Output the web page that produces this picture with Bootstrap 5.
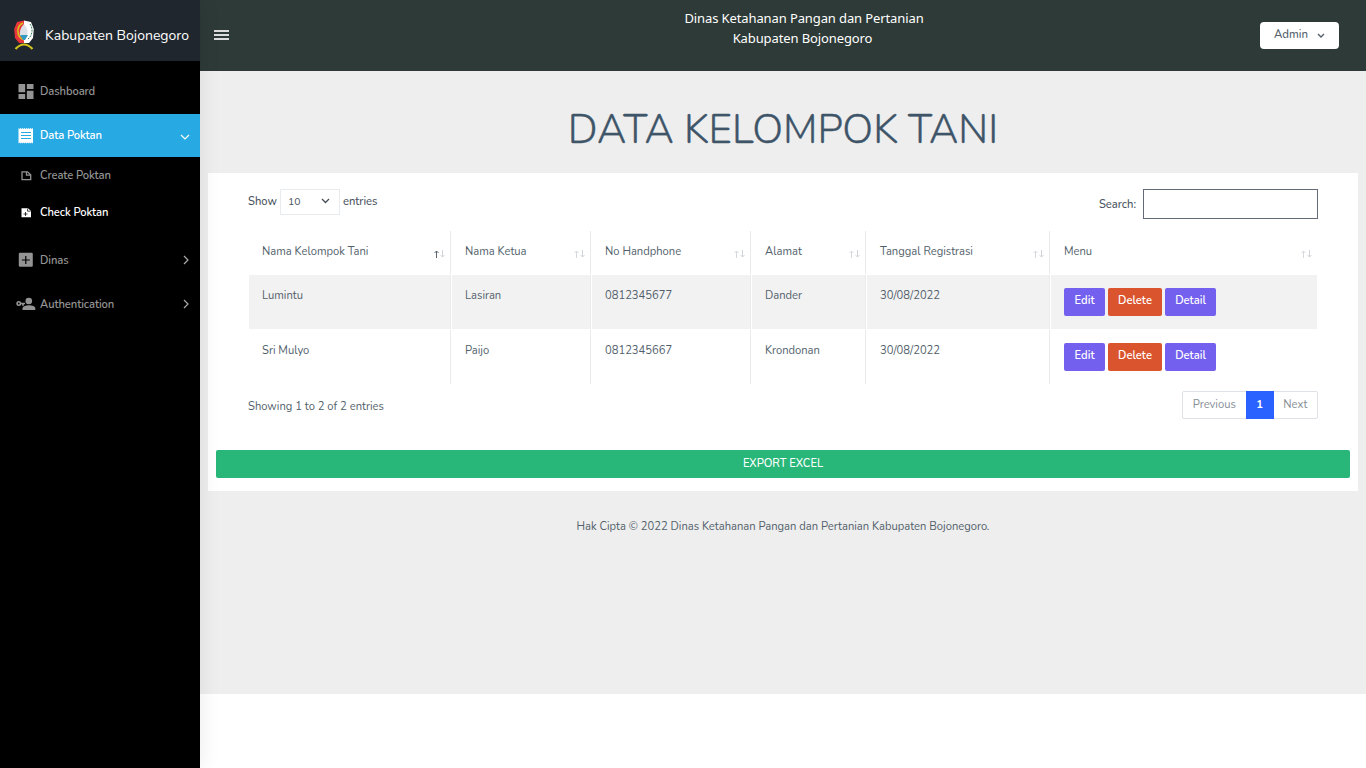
<!DOCTYPE html>
<html lang="id">
<head>
<meta charset="utf-8">
<meta name="viewport" content="width=device-width, initial-scale=1">
<title>Data Kelompok Tani</title>
<link href="https://cdn.jsdelivr.net/npm/bootstrap@5.3.0/dist/css/bootstrap.min.css" rel="stylesheet">
<style>
body{font-family:Nunito,Lato,"Open Sans",sans-serif;font-size:11.2px;line-height:17px;color:#525f6b;background:#fff;height:768px;overflow:hidden}
.side{width:200px;height:768px;background:#000;box-shadow:1px 0 20px rgba(0,0,0,.08);z-index:2}
.brand{height:61px;background:#1f262d;color:#fff;padding:9px 0 0 12px;font-size:14px}
.brand svg{margin-right:9px}
.brand-name{margin-top:18px}
.side-link{color:#949494;font-weight:600;letter-spacing:-.09px;padding:0 10px 0 18px;text-decoration:none;height:44px}
.side-link span{flex:1}
.side-link.on{background:#27a9e3;color:#fff;height:43px}
.side-link.sub{height:37px}
.main-ico{width:16px;margin-right:6px;flex:none;overflow:visible}
.topbar{height:71px;background:#2d3a37;color:#fff}
.agency{font-family:"Noto Sans",sans-serif;font-size:13px;line-height:20px;padding-top:8px;margin-left:55px;letter-spacing:-.11px}
.adm{background:#fff;color:#525f6b;width:79px;height:27px;border-radius:4px;font-size:11.4px;line-height:25px;padding:0 14px;border:0;margin:22px 27px 0 0;font-weight:500}
.burger{margin:29px 0 0 14px;width:79px;padding-right:64px;box-sizing:border-box}
.page-area{background:#eee;height:623px}
.big-title{font-weight:300;font-size:40.6px;line-height:48px;color:#3e5569;-webkit-text-stroke:.35px #3e5569;margin:0;padding-top:35px;height:102px}
.panel{background:#fff;margin:0 8px;height:318px;padding:16px 8px 13px}
.inner{padding:0 32px}
.lbl{font-weight:500;color:#4a5360}
.sel{width:60px;height:26px;border:1px solid #e9ecef;padding:0 9px 1px 7px;font-size:10.4px;font-weight:400;margin:0 3px}
.sel svg{margin-top:-1px}
.find{width:175px;height:30px;border:1px solid #626a75;border-radius:0;margin-left:7px;background:#fff}
.grid-table{border-collapse:separate;border-spacing:1px;table-layout:fixed;width:1070px;margin-top:11px}
.grid-table th,.grid-table td{font-weight:400;padding:12px 13px 0;vertical-align:top;border-right:1px solid #e9ecef}
.grid-table th:last-child,.grid-table td:last-child{border-right:0}
.grid-table th{height:43px}.grid-table td{height:54px}
.grid-table tr.z td{background:#f2f2f2}
.sorter{margin:6px -8px 0 0}
.act{color:#fff;font-size:11.2px;line-height:17px;height:28px;padding:4px 0 7px;border:0;border-radius:2px;font-weight:600}
.violet{background:#7460ee}.rust{background:#da542e}
.pagination{--bs-pagination-font-size:11.2px}
.page-link{height:28px;padding:4px 9.7px;line-height:18px;color:#868e96;border-color:#dee2e6}
.page-item.active .page-link{background:#2962ff;border-color:#2962ff;font-weight:700}
.page-item:first-child .page-link,.page-item:last-child .page-link{border-radius:2px}
.export{background:#28b779;color:#fff;height:28px;border-radius:2px;border:0;line-height:17px;padding:5px 0 6px;font-size:11.2px;font-weight:500}
</style>
</head>
<body>
<div class="d-flex">
<aside class="side flex-shrink-0 position-relative">
  <div class="brand d-flex align-items-start">
    <svg width="24" height="44" viewBox="0 0 24 44"><path d="M12 11.500L5 13 2.200 20 3 29 7 34H12Z" fill="#e8353b"/><path d="M12 11.500L19 13 21.800 20 21 29 17 34H12Z" fill="#fff"/><path d="M18 15c3 4 3 11-2 15" fill="none" stroke="#348060" stroke-width="1" stroke-dasharray="2 1"/><path d="M11 14C4 17 4 28 12 31" fill="none" stroke="#d8bd20" stroke-width="1.6"/><path d="M12 15q5 6 3 12H8Q7 20 12 15" fill="#dce1e8"/><path d="M8 26h8l-3 5h-2z" fill="#319ac3"/><path d="M3.500 40q8.500-9 17 0" fill="none" stroke="#d4c31b" stroke-width="2.2"/></svg>
    <span class="brand-name">Kabupaten Bojonegoro</span>
  </div>
  <nav class="d-flex flex-column">
    <a class="side-link d-flex align-items-center" style="margin-top:8px"><svg class="main-ico" height="15" viewBox="3 3 18 18" fill="#949494"><path d="M3 3h8v10H3zM13 3h8v6h-8zM13 11h8v10h-8zM3 15h8v6H3z"/></svg><span>Dashboard</span></a>
    <a class="side-link on d-flex align-items-center" style="margin-top:1px"><svg class="main-ico" height="16" viewBox="0 0 16 16"><path d="M.5 0l1 1 1-1 1 1 1-1 1 1 1-1 1 1 1-1 1 1 1-1 1 1 1-1 1 1 1-1 .5 1V14.500l-.5 1-1-1-1 1-1-1-1 1-1-1-1 1-1-1-1 1-1-1-1 1-1-1-1 1-1-1-1 1Z" fill="#fff"/><path d="M3 4.500h10M3 7.500h10M3 10.500h10" stroke="#27a9e3"/></svg><span>Data Poktan</span><svg width="10" height="6" viewBox="0 0 10 6" style="margin-top:2px"><path d="M1 1l4 4 4-4" fill="none" stroke="#fff" stroke-width="1.2"/></svg></a>
    <a class="side-link sub d-flex align-items-center"><svg class="main-ico" height="10" viewBox="0 0 16 10"><path d="M4 .8h5.500l3.200 2.900v5H4z M8.500 1v3.200h4" fill="none" stroke="#949494" stroke-width="1.3"/></svg><span>Create Poktan</span></a>
    <a class="side-link sub d-flex align-items-center text-white"><svg class="main-ico" height="10" viewBox="0 0 16 10"><path d="M3.500.3h6.500l3 2.800v6.200H3.500z" fill="#fff"/><path d="M7.500 4v4M5.500 6h4M9.600 .6v2.600h3" fill="none" stroke="#111" stroke-width=".8"/></svg><span>Check Poktan</span></a>
    <a class="side-link d-flex align-items-center" style="margin-top:7px"><svg class="main-ico" height="16" viewBox="0 0 16 16"><rect x=".8" y=".8" width="14" height="14" rx="1.300" fill="#949494"/><path d="M7.800 4v8M3.800 8h8" stroke="#000" stroke-width="1.200"/></svg><span>Dinas</span><svg width="8" height="10" viewBox="0 0 8 10"><path d="M2 1l4 4-4 4" fill="none" stroke="#aaa" stroke-width="1.2"/></svg></a>
    <a class="side-link d-flex align-items-center"><svg class="main-ico" height="16" viewBox="0 0 16 16"><circle cx="10.800" cy="5" r="3.300" fill="#949494"/><path d="M4.500 14v-2q1-2.700 6.500-2.700 5.500 0 6.300 2.700v2z" fill="#949494"/><circle cx=".8" cy="7.500" r="1.700" fill="none" stroke="#949494" stroke-width="1.600"/><path d="M2.700 7.500H7M5 7.500v2.200" stroke="#949494" stroke-width="1.700"/></svg><span>Authentication</span><svg width="8" height="10" viewBox="0 0 8 10"><path d="M2 1l4 4-4 4" fill="none" stroke="#aaa" stroke-width="1.2"/></svg></a>
  </nav>
</aside>
<main class="flex-grow-1">
  <header class="topbar d-flex justify-content-between">
    <svg class="burger" height="12" viewBox="0 0 15 12"><path d="M0 2h15M0 6h15M0 10h15" stroke="#ddd" stroke-width="1.8"/></svg>
    <div class="agency text-center"><div>Dinas Ketahanan Pangan dan Pertanian</div><div style="margin-right:3px">Kabupaten Bojonegoro</div></div>
    <button class="adm d-flex justify-content-between"><span>Admin</span><svg width="8" height="6" viewBox="0 0 8 6" style="margin-top:11px"><path d="M1 1l3 3 3-3" fill="none" stroke="#525f6b" stroke-width="1.4"/></svg></button>
  </header>
  <div class="page-area">
    <h1 class="big-title text-center">DATA KELOMPOK TANI</h1>
    <section class="panel">
      <div class="inner">
        <div class="d-flex justify-content-between align-items-start">
          <div class="d-flex align-items-start lbl"><span style="padding-top:4px">Show</span><div class="sel d-flex align-items-center justify-content-between"><span>10</span><svg width="9" height="6" viewBox="0 0 9 6"><path d="M1 1l3.500 3.500L8 1" fill="none" stroke="#444c55" stroke-width="1.3"/></svg></div><span style="padding-top:4px">entries</span></div>
          <label class="d-flex align-items-center lbl"><span>Search:</span><input class="find" type="search" aria-label="Search"></label>
        </div>
        <table class="grid-table">
          <colgroup><col style="width:202px"><col style="width:139px"><col style="width:159px"><col style="width:114px"><col style="width:183px"><col style="width:266px"></colgroup>
          <thead><tr id="heads"></tr></thead>
          <tbody id="rows"></tbody>
        </table>
        <div class="d-flex justify-content-between" style="margin-top:6px;height:59px">
          <div style="padding-top:7px">Showing 1 to 2 of 2 entries</div>
          <ul class="pagination mb-0"><li class="page-item"><a class="page-link">Previous</a></li><li class="page-item active"><a class="page-link">1</a></li><li class="page-item"><a class="page-link">Next</a></li></ul>
        </div>
      </div>
      <button class="export w-100 d-block">EXPORT EXCEL</button>
    </section>
    <footer class="text-center" style="padding-top:27px">Hak Cipta © 2022 Dinas Ketahanan Pangan dan Pertanian Kabupaten Bojonegoro.</footer>
  </div>
</main>
</div>
<script>
const heads=["Nama Kelompok Tani","Nama Ketua","No Handphone","Alamat","Tanggal Registrasi","Menu"];
document.getElementById("heads").innerHTML=heads.map((h,i)=>`<th><div class="d-flex justify-content-between"><span>${h}</span><svg class="sorter" width="12" height="10" viewBox="0 0 12 10"><path d="M3.500 9V2M1.500 4l2-2 2 2" fill="none" stroke="${i?'#d5d9dd':'#5b6670'}"/><path d="M9.500 1v7M7.500 6l2 2 2-2" fill="none" stroke="#d0d4d8"/></svg></div></th>`).join("");
const rows=[["Lumintu","Lasiran","0812345677","Dander","30/08/2022"],["Sri Mulyo","Paijo","0812345667","Krondonan","30/08/2022"]];
document.getElementById("rows").innerHTML=rows.map((r,i)=>`<tr class="${i?'':'z'}">${r.map(c=>`<td>${c}</td>`).join("")}<td><div class="d-flex" style="gap:3px;padding-top:1px"><button class="act violet" style="width:41px">Edit</button><button class="act rust" style="width:54px">Delete</button><button class="act violet" style="width:51px">Detail</button></div></td></tr>`).join("");
</script>
<script src="https://cdn.jsdelivr.net/npm/bootstrap@5.3.0/dist/js/bootstrap.bundle.min.js"></script>
</body>
</html>
